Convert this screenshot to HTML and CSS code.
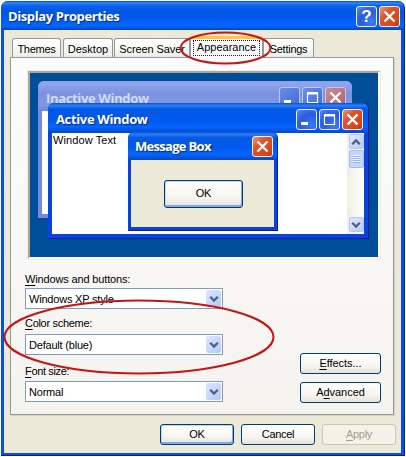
FILE: index.html
```html
<!DOCTYPE html>
<html lang="en">
<head>
<meta charset="utf-8">
<title>Display Properties</title>
<link rel="stylesheet" href="styles.css">
</head>
<body>
<svg class="defs" width="0" height="0" aria-hidden="true">
  <symbol id="close" viewBox="0 0 21 21"><path d="M5.5 5.5l10 10M15.5 5.5l-10 10" stroke="#fff" stroke-width="2.4"/></symbol>
  <symbol id="min" viewBox="0 0 21 21"><path d="M5 14.5h7" stroke="#fff" stroke-width="3"/></symbol>
  <symbol id="max" viewBox="0 0 21 21"><path d="M5.5 6v9.5h10V6M4.9 6.5h11.2" fill="none" stroke="#fff" stroke-width="1.2"/><path d="M5 6.2h11" stroke="#fff" stroke-width="2.6"/></symbol>
  <symbol id="down" viewBox="0 0 10 8"><path d="M1.2 1.8L5 5.6l3.800-3.800" fill="none" stroke="#4d6185" stroke-width="2.3"/></symbol>
</svg>
<main class="dialog">
  <header class="titlebar">
    <h1 class="title">Display Properties</h1>
    <span class="cap help">?</span>
    <span class="cap close"><svg><use href="#close"/></svg></span>
  </header>
  <div class="client">
    <nav class="tabs">
      <span class="tab themes">Themes</span>
      <span class="tab desktop">Desktop</span>
      <span class="tab saver">Screen Saver</span>
      <span class="tab active"><span class="focus">Appearance</span></span>
      <span class="tab settings">Settings</span>
    </nav>
    <section class="panel">
      <div class="preview">
        <div class="win inactive">
          <div class="bar"><span class="name">Inactive Window</span>
            <span class="cap"><svg><use href="#min"/></svg></span><span class="cap"><svg><use href="#max"/></svg></span><span class="cap close"><svg><use href="#close"/></svg></span>
          </div>
          <div class="body"></div>
        </div>
        <div class="win front">
          <div class="bar"><span class="name">Active Window</span>
            <span class="cap"><svg><use href="#min"/></svg></span><span class="cap"><svg><use href="#max"/></svg></span><span class="cap close"><svg><use href="#close"/></svg></span>
          </div>
          <div class="body"><span class="wtext">Window Text</span>
            <div class="scroll">
              <span class="sbtn up"><svg class="chev"><use href="#down"/></svg></span>
              <span class="thumb"></span>
              <span class="sbtn end"><svg class="chev"><use href="#down"/></svg></span>
            </div>
          </div>
        </div>
        <div class="win message">
          <div class="bar"><span class="name">Message Box</span><span class="cap close"><svg><use href="#close"/></svg></span></div>
          <div class="body"><span class="btn default">OK</span></div>
        </div>
      </div>
      <div class="options">
        <div class="fields">
          <label class="label"><u>W</u>indows and buttons:</label>
          <div class="select"><span>Windows XP style</span><i class="drop"><svg class="chev"><use href="#down"/></svg></i></div>
          <label class="label color"><u>C</u>olor scheme:</label>
          <div class="select"><span>Default (blue)</span><i class="drop"><svg class="chev"><use href="#down"/></svg></i></div>
          <label class="label last"><u>F</u>ont size:</label>
          <div class="select"><span>Normal</span><i class="drop"><svg class="chev"><use href="#down"/></svg></i></div>
        </div>
        <div class="side">
          <span class="btn effects"><u>E</u>ffects...</span>
          <span class="btn advanced">A<u>d</u>vanced</span>
        </div>
      </div>
    </section>
    <footer class="actions">
      <span class="btn default">OK</span>
      <span class="btn">Cancel</span>
      <span class="btn disabled"><u>A</u>pply</span>
    </footer>
  </div>
</main>
<svg class="marks" viewBox="0 0 406 457" aria-hidden="true">
  <ellipse cx="225.500" cy="48" rx="45" ry="15.500"/>
  <ellipse cx="139" cy="337" rx="134.500" ry="36.500"/>
</svg>
</body>
</html>
```
FILE: styles.css
```css
* { box-sizing: border-box; }
body { margin: 0; width: 406px; height: 457px; overflow: hidden; background: #fff; font: 11px/13px "Liberation Sans", Arial, sans-serif; color: #000; padding: 1px 1px 1px 1px; }
.defs { position: absolute; }
svg { display: block; }
u { text-decoration: underline; text-underline-offset: 2px; text-decoration-thickness: 1px; text-decoration-skip-ink: none; }
.dialog { width: 404px; height: 455px; border-radius: 7px 7px 0 0; background: #0a50e0; overflow: hidden; border-right: 1px solid #001ea0; border-bottom: 1px solid #001ea0; }
.titlebar { display: flex; align-items: center; gap: 2px; height: 29px; padding: 1px 4px 0 7px; background: linear-gradient(#0a4fd0 0, #2f86fb 7%, #0b64ee 16%, #0356e2 35%, #0259ef 60%, #0665fd 80%, #0560f2 90%, #0343c4 100%); }
.title, .name { font: bold 13px/18px "Open Sans", "Noto Sans", sans-serif; color: #fff; text-shadow: 1px 1px 1px #092c80; white-space: nowrap; flex: 1; margin: 0; }
.title { letter-spacing: -.4px; }
.cap { width: 21px; height: 21px; flex: none; border: 1px solid #e8efff; border-radius: 3px; background: radial-gradient(circle at 75% 80%, #3c7af4, #2a5bdc 55%, #5c88ec); color: #fff; }
.cap svg { width: 21px; height: 21px; margin: -1px; }
.cap.close { background: linear-gradient(135deg, #f09475, #e1522c 35%, #d74518 80%, #b93410); }
.help { text-align: center; font: bold 17px/19px "Liberation Sans", sans-serif; }
.client { margin: 0 3px 0 3px; height: 423px; background: #ece9d8; padding: 7px 6px 0 6px; }
.tabs { display: flex; align-items: flex-end; height: 20px; padding-left: 2px; }
.tab { height: 19px; border: 1px solid #919b9c; border-bottom: 0; border-radius: 3px 3px 0 0; background: linear-gradient(#fff, #f6f5f0 70%, #ecebe6); padding-top: 4px; text-align: center; white-space: nowrap; }
.themes { width: 49px; margin-right: 2px; letter-spacing: -.25px; }
.desktop { width: 50px; margin-right: 1px; }
.saver { width: 76px; letter-spacing: -.1px; }
.tab.active { width: 73px; height: 22px; margin-bottom: -1px; background: #fcfcfe; border-top: 3px solid #ffc73c; padding: 1px 2px 0; z-index: 1; }
.focus { display: block; height: 16px; outline: 1px dotted #222; outline-offset: -1px; line-height: 15px; }
.settings { width: 51px; letter-spacing: -.25px; }
.panel { width: 384px; height: 358px; border: 1px solid #919b9c; box-shadow: 1px 1px 0 #d5d2c5; background: linear-gradient(#fcfcfe, #f4f3ee); padding: 13px 0 0 14px; }
.preview { position: relative; width: 352px; height: 188px; margin-left: 3px; background: #004e98; border: 2px solid; border-color: #aca899 #fff #fff #aca899; box-shadow: 0 0 0 1px #efede4; overflow: hidden; }
.win { position: absolute; display: flex; flex-direction: column; border-radius: 6px 6px 0 0; background: #0831d9; }
.bar { display: flex; align-items: center; gap: 2px; flex: none; border-radius: 6px 6px 0 0; background: linear-gradient(#0a4fd0, #2a80f8 8%, #0758e2 20%, #0058ee 55%, #0665fd 80%, #0348cc); }
.body { flex: 1; background: #fff; }
.inactive { left: 8px; top: 8px; width: 314px; height: 137px; background: #7688df; padding: 0 4px 4px; }
.inactive .bar { height: 30px; margin: 0 -4px; padding: 3px 6px 0 8px; background: linear-gradient(#8f9fe6, #8fa5ec 10%, #7b92df 40%, #8099e5 80%, #7488d8); }
.inactive .name { color: #cfdcf8; text-shadow: none; }
.inactive .cap { border-color: #b8c7f5; background: linear-gradient(135deg, #6b8de5, #426ad8); }
.inactive .close { background: linear-gradient(135deg, #c98d96, #b75d6c); }
.name { letter-spacing: -.35px; }
.front { left: 18px; top: 30px; width: 321px; height: 136px; padding: 0 4px 4px; border: solid #001ea8; border-width: 0 1px 1px 0; background: #0a43df; }
.front .bar { height: 30px; margin: 0 -4px; padding: 2px 5px 0 8px; }
.front .body { display: flex; justify-content: space-between; }
.wtext { padding: 1px 0 0 1px; letter-spacing: .1px; }
.scroll { width: 17px; display: flex; flex-direction: column; align-items: center; padding: 1px 0 2px 1px; background: linear-gradient(90deg, #f0efe6, #fefefb); }
.sbtn { display: flex; align-items: center; justify-content: center; width: 15px; height: 15px; border: 1px solid #b3c7f2; border-radius: 2px; background: linear-gradient(135deg, #dfe8ff, #b7caf6); }
.up .chev { transform: rotate(180deg); }
.chev { width: 10px; height: 8px; }
.thumb { width: 15px; height: 18px; margin-top: 1px; border: 1px solid #a5bbee; border-radius: 2px; background: repeating-linear-gradient(#f1f5ff 0 1px, #9bb3e8 1px 2px) 50% 50% / 7px 8px no-repeat, #c5d5fc; }
.end { margin-top: auto; }
.message { left: 98px; top: 59px; width: 150px; height: 99px; padding: 0 3px 3px; border: solid #001ea8; border-width: 0 1px 1px 0; background: #0a43df; }
.message .bar { height: 28px; margin: 0 -3px; padding: 0 4px 0 7px; }
.message .body { background: #ece9d8; padding: 20px 0 0 33px; }
.message .btn { width: 79px; height: 28px; padding-bottom: 2px; }
.message .name { letter-spacing: -.7px; }
.btn { display: flex; flex: none; align-items: center; justify-content: center; width: 74px; height: 21px; border: 1px solid #003c74; border-radius: 3px; background: linear-gradient(#fff, #f5f4ee 65%, #e5e2d8); white-space: pre; letter-spacing: -.3px; }
.btn.default { box-shadow: inset -1px -2px 0 #85a6e9, inset 1px 1px 0 #c2d5f6; }
.options { display: flex; justify-content: space-between; padding-right: 12px; }
.label { display: block; height: 14px; margin-top: 14px; margin-bottom: 1px; letter-spacing: -.15px; }
.fields { width: 198px; }
.select { display: flex; justify-content: space-between; height: 21px; border: 1px solid #7f9db9; background: #fff; padding: 1px 1px 1px 3px; line-height: 18px; letter-spacing: -.2px; }
.label.color { margin-top: 8px; margin-bottom: 3px; letter-spacing: -.3px; }
.label.last { margin-top: 10px; margin-bottom: 2px; letter-spacing: -.35px; }
.drop { display: flex; align-items: center; justify-content: center; width: 15px; border-radius: 2px; background: linear-gradient(135deg, #dce6ff, #b5c9f7); }
.side { display: flex; flex-direction: column; gap: 8px; padding-top: 94px; }
.side .btn { width: 81px; letter-spacing: -.05px; }
.actions { display: flex; gap: 7px; margin: 9px 0 0 150px; }
.actions .disabled { color: #a1a192; border-color: #c9c7ba; background: #f3f1e8; }
.marks { position: absolute; left: 0; top: 0; width: 406px; height: 457px; fill: none; stroke: #c61414; stroke-width: 2; z-index: 5; }
```
